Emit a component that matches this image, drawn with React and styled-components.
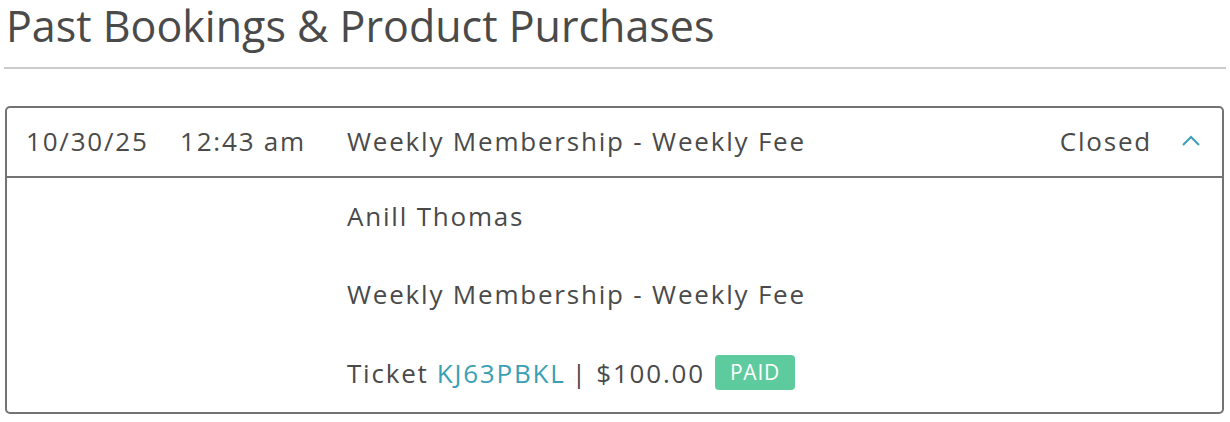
import React from 'react'
import styled, { createGlobalStyle } from 'styled-components'

const Global = createGlobalStyle`
    body {
        margin: 0;
        background: #fff;
        font-family: "Open Sans", Lato, sans-serif;
        color: #4a4a4a;
    }
`

const Page = styled.div`
    padding: 0 4px 0 4px;
`

const Title = styled.h1`
    margin: -3px 0 0 0;
    padding: 0 0 12px 2px;
    font-size: 43px;
    font-weight: 400;
    line-height: 58px;
    color: #4a4a4a;
    border-bottom: 2px solid #cccccc;
`

const Card = styled.div`
    margin: 37px 2px 0 1px;
    border: 2px solid #737373;
    border-radius: 5px;
    font-size: 26px;
    letter-spacing: 1.8px;
`

const Header = styled.div`
    display: flex;
    align-items: center;
    height: 70px;
    padding: 0 20px 2px 19px;
    box-sizing: border-box;
    border-bottom: 2px solid #737373;
`

const Cell = styled.span`
    flex: 0 0 ${p => p.w}px;
`

const Name = styled.span`
    flex: 1;
`

const Status = styled.span`
    margin-right: 28px;
`

const Body = styled.div`
    display: flex;
    flex-direction: column;
    gap: 44px;
    padding: 21px 0 22px 340px;
    line-height: 34px;
`

const Row = styled.div`
    display: flex;
    align-items: center;
    min-height: 34px;
`

const Link = styled.span`
    color: #3a9fb5;
    margin: 0 6px 0 8px;
`

const Badge = styled.span`
    margin-left: 10px;
    background: #5dcb9e;
    color: #fff;
    border-radius: 4px;
    font-size: 21px;
    letter-spacing: 0.8px;
    line-height: 35px;
    padding: 0 15px;
`

const Chevron = () => (
    <svg width="22" height="14" viewBox="0 0 22 14">
        <path d="M3 11 L11 3 L19 11" fill="none" stroke="#3a9fb5" strokeWidth="2" />
    </svg>
)

export default function App() {
    return (
        <>
            <Global />
            <Page>
                <Title>Past Bookings &amp; Product Purchases</Title>
                <Card>
                    <Header>
                        <Cell w={154}>10/30/25</Cell>
                        <Cell w={167}>12:43 am</Cell>
                        <Name>Weekly Membership - Weekly Fee</Name>
                        <Status>Closed</Status>
                        <Chevron />
                    </Header>
                    <Body>
                        <Row>Anill Thomas</Row>
                        <Row>Weekly Membership - Weekly Fee</Row>
                        <Row>
                            Ticket<Link>KJ63PBKL</Link>| $100.00<Badge>PAID</Badge>
                        </Row>
                    </Body>
                </Card>
            </Page>
        </>
    )
}
